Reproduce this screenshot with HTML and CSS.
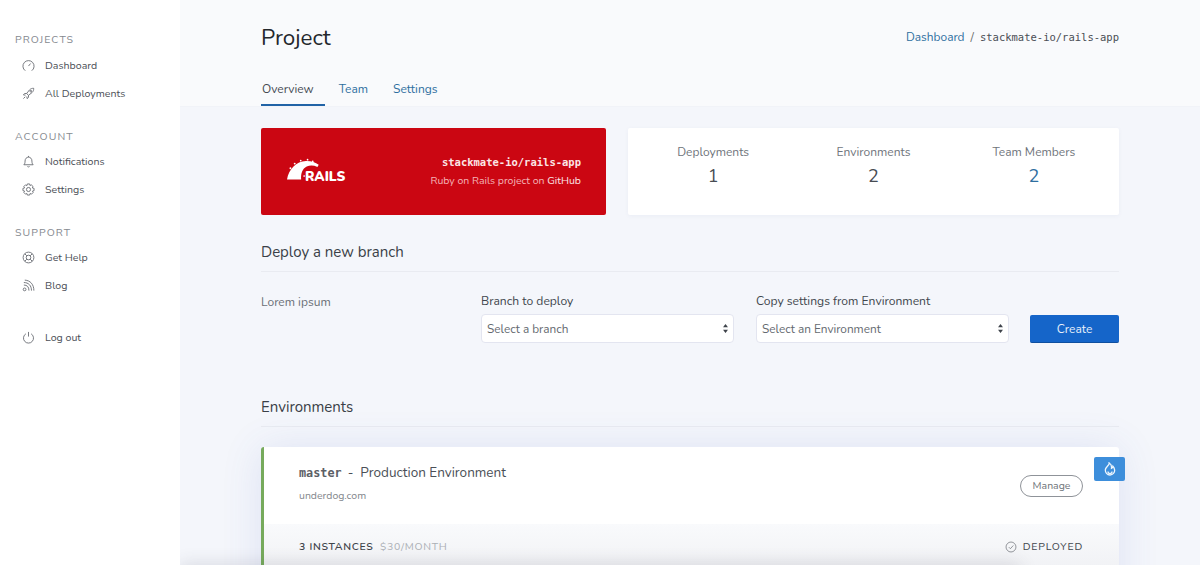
FILE: index.html
```html
<!DOCTYPE html>
<html lang="en">
<head>
<meta charset="utf-8">
<title>Project</title>
<link rel="stylesheet" href="styles.css">
</head>
<body>
<div class="app">
  <aside class="sidebar">
    <h6 class="nav-title nav-first">PROJECTS</h6>
    <a class="nav-item"><svg class="nav-icon" viewBox="0 0 14 14"><path d="M3.500 12.600A6 6 0 1 1 10.500 12.600"/><path d="M7 7.600 9.200 4.900"/></svg>Dashboard</a>
    <a class="nav-item"><svg class="nav-icon" viewBox="0 0 14 14"><path d="M5 7 8 3.200C9.300 1.800 11 1.300 12.600 1.400 12.700 3 12.200 4.700 10.800 6L7 9Z"/><path d="M5 7H2.800L1.500 8.500 3.800 8.800M7 9V11.200L5.500 12.500 5.200 10.200"/><path d="M3.500 10.500 1.500 12.500"/><circle cx="9.500" cy="4.500" r=".9"/></svg>All Deployments</a>
    <h6 class="nav-title nav-gap">ACCOUNT</h6>
    <a class="nav-item"><svg class="nav-icon" viewBox="0 0 14 14"><path d="M2 10.500C3 9.500 3.300 8.500 3.300 6.500 3.300 4 5 2.300 7 2.300S10.700 4 10.700 6.500C10.700 8.500 11 9.500 12 10.500Z"/><path d="M5.800 12.300C6.300 13 7.700 13 8.200 12.300M7 1V2.300"/></svg>Notifications</a>
    <a class="nav-item"><svg class="nav-icon" viewBox="0 0 14 14"><path d="M5.800 1H8.200L8.600 2.700 10 2 11.900 3.800 11.100 5.300 13 5.800V8.200L11.300 8.700 12 10.200 10.200 12 8.700 11.300 8.200 13H5.800L5.300 11.300 3.800 12 2 10.200 2.800 8.700 1 8.200V5.800L2.800 5.300 2 3.800 3.800 2 5.300 2.800Z"/><circle cx="7" cy="7" r="2.200"/></svg>Settings</a>
    <h6 class="nav-title nav-gap">SUPPORT</h6>
    <a class="nav-item"><svg class="nav-icon" viewBox="0 0 14 14"><circle cx="7" cy="7" r="5.800"/><circle cx="7" cy="7" r="2.500"/><path d="M3 3 5.200 5.200M11 3 8.800 5.200M3 11 5.200 8.800M11 11 8.800 8.800"/></svg>Get Help</a>
    <a class="nav-item"><svg class="nav-icon" viewBox="0 0 14 14"><circle cx="2.800" cy="11.200" r="1.500"/><path d="M2 6.500C5.500 6.500 7.500 8.500 7.500 12.500M2 3.800C7 3.800 10.200 7 10.200 12.500M3 1.200C9 1.500 12.800 6 12.800 12.500"/></svg>Blog</a>
    <a class="nav-item nav-logout"><svg class="nav-icon" viewBox="0 0 14 14"><path d="M4.200 3A5.400 5.400 0 1 0 9.800 3"/><path d="M7 1V6"/></svg>Log out</a>
  </aside>
  <main class="main">
    <header class="page-header">
      <div class="title-row">
        <h1 class="page-title">Project</h1>
        <div class="crumbs"><a class="link">Dashboard</a><span class="crumb-sep">/</span><code class="crumb-code">stackmate-io/rails-app</code></div>
      </div>
      <nav class="tabs">
        <a class="tab tab-active">Overview</a>
        <a class="tab">Team</a>
        <a class="tab">Settings</a>
      </nav>
    </header>
    <div class="content">
      <section class="summary">
        <div class="project-card">
          <div class="rails-logo">
            <svg class="rails-arc" viewBox="0 0 42 24"><path d="M0 23C2 11 11 2 22 1.500 28 1.200 33 3 37 6L35.500 8.500C31 6.500 27 6.300 23 8 18 10.500 16 16 16.500 23Z"/><circle cx="4" cy="10" r="1.100"/><circle cx="9" cy="4.500" r="1.100"/><circle cx="16" cy="1" r="1"/><circle cx="24" cy="0" r="1"/><circle cx="30" cy="2" r="1"/><circle cx="20" cy="19" r="1"/></svg>
            <span class="rails-word">RAILS</span>
          </div>
          <div class="project-meta">
            <code class="project-name">stackmate-io/rails-app</code>
            <p class="project-desc">Ruby on Rails project on <span class="project-host">GitHub</span></p>
          </div>
        </div>
        <div class="stats">
          <div class="stat"><span class="stat-label">Deployments</span><span class="stat-value">1</span></div>
          <div class="stat"><span class="stat-label">Environments</span><span class="stat-value">2</span></div>
          <div class="stat"><span class="stat-label">Team Members</span><span class="stat-value stat-link">2</span></div>
        </div>
      </section>
      <h2 class="section-title">Deploy a new branch</h2>
      <form class="deploy-form">
        <div class="form-intro">Lorem ipsum</div>
        <div class="field">
          <label class="field-label">Branch to deploy</label>
          <div class="select"><span>Select a branch</span><svg class="select-arrows" viewBox="0 0 6 11"><path d="M3 0 6 4H0ZM3 11 0 7H6Z"/></svg></div>
        </div>
        <div class="field">
          <label class="field-label">Copy settings from Environment</label>
          <div class="select"><span>Select an Environment</span><svg class="select-arrows" viewBox="0 0 6 11"><path d="M3 0 6 4H0ZM3 11 0 7H6Z"/></svg></div>
        </div>
        <button class="create-btn" type="button">Create</button>
      </form>
      <h2 class="section-title section-env">Environments</h2>
      <article class="env-card">
        <button class="fire-btn" type="button" aria-label="Deploy"><svg viewBox="0 0 14 14"><path d="M6.200 1C6.600 3 3 4.600 2.400 7.500 2 10.500 4.200 13 7 13S12 10.500 11.600 7.800C11.400 6.200 10.700 5 9.900 4.200 9.800 5.300 9.300 6 8.500 6.300 8.800 4.200 8 2 6.200 1Z"/><path d="M5 9.500C5 11 5.900 11.600 7 11.600S9 11 9 9.500"/></svg></button>
        <div class="env-main">
          <div class="env-text">
            <div class="env-title"><code class="env-branch">master</code><span class="env-dash">-</span><span>Production Environment</span></div>
            <div class="env-domain">underdog.com</div>
          </div>
          <a class="manage-btn">Manage</a>
        </div>
        <div class="env-foot">
          <div class="env-count">3 INSTANCES <span class="env-price">$30/MONTH</span></div>
          <div class="env-status"><svg viewBox="0 0 14 14"><circle cx="7" cy="7" r="5.800"/><path d="M4.500 7.200 6.300 9 9.700 5.200"/></svg>DEPLOYED</div>
        </div>
      </article>
    </div>
    <div class="fold-shade"></div>
  </main>
</div>
</body>
</html>
```
FILE: styles.css
```css
* { box-sizing: border-box; }
html, body { margin: 0; height: 100%; overflow: hidden; }
body { font-family: "Nunito", "Noto Sans", Lato, sans-serif; background: #f4f6fb; color: #3a3f47; }
h1, h2, h6, p { margin: 0; font-weight: 400; }
code { font-family: "DejaVu Sans Mono", monospace; }

.app { display: flex; height: 565px; overflow: hidden; }

.sidebar { position: relative; z-index: 1; width: 180px; flex: none; background: #fff; padding: 33px 0 0 15px; }
.nav-title { font-size: 10.500px; line-height: 13px; letter-spacing: 1.100px; color: #85898f; margin-bottom: 4px; }
.nav-first { margin-bottom: 5px; }
.nav-gap { margin-top: 23px; }
.nav-item { display: flex; align-items: center; gap: 10px; height: 28px; padding-left: 7px; font-size: 10.600px; color: #4c5057; }
.nav-icon { width: 13px; height: 13px; flex: none; fill: none; stroke: #65696f; stroke-width: .95; }
.nav-logout { margin-top: 24px; }

.main { position: relative; flex: 1; min-width: 0; overflow: hidden; }
.page-header { background: #f9fafc; height: 107px; padding: 0 81px; border-bottom: 1px solid #f1f3f8; }
.title-row { display: flex; justify-content: space-between; align-items: center; padding-top: 22px; height: 52px; }
.page-title { font-size: 22.400px; line-height: 31px; color: #24272c; }
.crumbs { display: flex; align-items: center; font-size: 11.900px; }
.link { color: #2f6f9f; }
.crumb-sep { margin: 0 6px; color: #666; }
.crumb-code { font-size: 10.500px; color: #4a4e55; }
.tabs { display: flex; gap: 13px; margin-top: 17px; }
.tab { height: 37px; padding: 11px 11px 0 1px; font-size: 12px; line-height: 18px; color: #2f6f9f; }
.tab-active { color: #454a52; border-bottom: 2px solid #2163a6; }

.content { padding: 21px 81px 0; }
.summary { display: flex; gap: 22px; height: 87px; }
.project-card { width: 345px; flex: none; display: flex; justify-content: space-between; align-items: center; padding: 0 25px 0 26px; background: #cb0612; border-radius: 2px; color: #fff; }
.rails-logo { position: relative; width: 58px; height: 22px; }
.rails-arc { position: absolute; left: 0; top: -3px; width: 36px; height: 24px; fill: #fff; }
.rails-word { position: absolute; left: 18px; top: 9px; font-size: 13.500px; line-height: 14px; font-weight: 900; color: #fff; }
.project-meta { text-align: right; }
.project-name { display: block; font-size: 10.500px; line-height: 14px; font-weight: 700; color: #fbe5e6; }
.project-desc { margin-top: 4px; font-size: 10.500px; line-height: 15px; color: #f3b4b8; }
.project-host { color: #fbe5e6; }
.stats { flex: 1; display: flex; background: #fff; border-radius: 2px; padding: 16px 5px 0; box-shadow: 0 1px 4px rgba(60, 80, 140, .05); }
.stat { flex: 1; display: flex; flex-direction: column; align-items: center; }
.stat-label { font-size: 12px; line-height: 17px; color: #6f747b; }
.stat-value { font-size: 18px; line-height: 24px; color: #474c53; margin-top: 3px; }
.stat-link { color: #2f6f9f; }

.section-title { font-size: 15px; line-height: 20px; color: #3a3f47; margin-top: 27px; padding-bottom: 9px; border-bottom: 1px solid #e9ebf1; }
.section-env { margin-top: 54px; padding-bottom: 9px; }

.deploy-form { display: flex; align-items: flex-end; margin-top: 20px; height: 51px; }
.form-intro { width: 220px; flex: none; align-self: flex-start; margin-top: 1px; font-size: 12px; line-height: 18px; color: #6a6f76; }
.field { width: 253px; flex: none; margin-right: 22px; }
.field-label { display: block; font-size: 12.100px; line-height: 17px; color: #41464d; margin-bottom: 4px; }
.select { display: flex; align-items: center; justify-content: space-between; height: 29px; padding: 0 5px; background: #fff; border: 1px solid #e3e5f0; border-radius: 4px; font-size: 11.800px; color: #64696f; }
.select-arrows { width: 5px; height: 9px; fill: #3f444b; }
.create-btn { width: 89px; height: 28px; margin: 0 0 0 -1px; padding: 0; background: #1565c9; border: 0; border-bottom: 1px solid #0f4f9f; border-radius: 2px; color: #e9f1fb; font: inherit; font-size: 12px; }

.env-card { position: relative; margin-top: 20px; height: 200px; background: #fff; border-left: 3px solid #76aa5c; border-radius: 3px; box-shadow: 0 2px 40px rgba(70, 90, 190, .13); }
.fire-btn { position: absolute; right: -6px; top: 10px; display: flex; align-items: center; justify-content: center; width: 31px; height: 24px; padding: 0; background: #3d8edb; border: 0; border-radius: 2px; }
.fire-btn svg { width: 14px; height: 14px; fill: none; stroke: #eef6fd; stroke-width: 1.300; }
.env-main { display: flex; justify-content: space-between; align-items: center; height: 77px; padding: 0 36px 0 35px; }
.env-text { margin-top: -5px; }
.env-title { display: flex; align-items: center; font-size: 13.500px; line-height: 18px; color: #4a4f56; }
.env-branch { font-size: 11.800px; font-weight: 700; color: #5c6066; }
.env-dash { margin: 0 7px 0 6px; }
.env-domain { margin-top: 7px; font-size: 10.500px; line-height: 14px; color: #83878d; }
.manage-btn { display: flex; align-items: center; justify-content: center; width: 63px; height: 22px; border: 1px solid #8f9399; border-radius: 11px; font-size: 10.500px; color: #6d7278; }
.env-foot { display: flex; justify-content: space-between; align-items: flex-start; height: 44px; padding: 16px 36px 0 35px; background: linear-gradient(#f9fafc, #f1f2f5); }
.env-count { font-size: 10.500px; line-height: 14px; letter-spacing: .7px; font-weight: 600; color: #3f444b; }
.env-price { font-weight: 400; color: #abafb5; margin-left: 3px; }
.env-status { display: flex; align-items: center; gap: 6px; font-size: 10.500px; line-height: 14px; letter-spacing: .8px; color: #40454c; }
.env-status svg { width: 12px; height: 12px; fill: none; stroke: #75797f; stroke-width: .9; }

.fold-shade { position: absolute; left: 0; right: 180px; bottom: -14px; height: 14px; box-shadow: 0 0 18px rgba(60, 60, 80, .18); pointer-events: none; }
```
